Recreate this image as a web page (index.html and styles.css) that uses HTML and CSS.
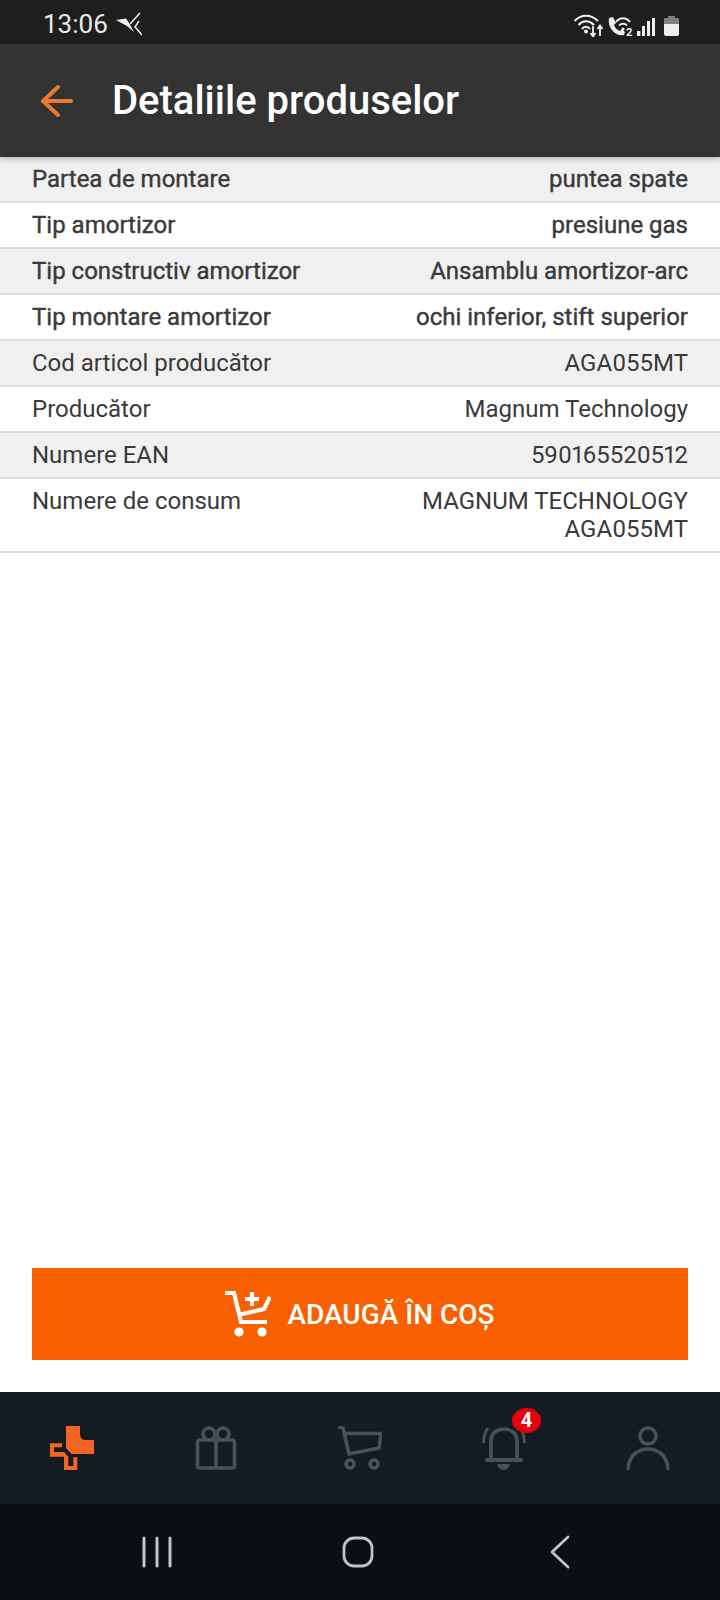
FILE: index.html
```html
<!DOCTYPE html>
<html lang="ro">
<head>
  <meta charset="UTF-8">
  <meta name="viewport" content="width=device-width, initial-scale=1.0">
  <title>Detaliile produselor</title>
  <link rel="stylesheet" href="styles.css">
</head>
<body>
  <div class="statusBar">
    <div class="statusLeft">
      <span class="time">13:06</span>
      <svg class="birdIcon" width="26" height="24" viewBox="0 0 26 24" fill="none" stroke="#eee" stroke-width="1.5">
        <path d="M0 8 L10 6.5 L13 11 L18 20 L11 14 Z" fill="#eee" stroke="none"/>
        <path d="M24 1 L14 12"/>
        <path d="M23 9 L19 15 L26 23"/>
      </svg>
    </div>
    <div class="statusRight">
      <svg width="30" height="26" viewBox="0 0 30 26" fill="none" stroke="#eee" stroke-width="2.2">
        <path d="M1.5 10 C8 3 18 3 25 10"/>
        <path d="M5.5 14 C10 9 16 9 21 14"/>
        <path d="M9 18 C11 15 15 15 17 18"/>
        <circle cx="13" cy="20.5" r="2" fill="#eee" stroke="none"/>
        <path d="M20 15 V25 M17.5 22 L20 25.5 L22.5 22" stroke-width="1.8"/>
        <path d="M27 25 V15 M24.5 18 L27 14.5 L29.5 18" stroke-width="1.8"/>
      </svg>
      <svg width="28" height="34" viewBox="0 -4 28 34" fill="none" stroke="#eee" stroke-width="2">
        <path d="M3 7 L7 6 L10 12 L8 14 C9 17 11 19 14 20 L16 18 L19 21 L18 24 C10 26 1 17 3 7 Z" fill="#eee" stroke="none"/>
        <path d="M10 11 C14 6 20 6 24 11"/>
        <path d="M13 14.5 C15 12 19 12 21 14.5"/>
        <circle cx="17" cy="18" r="1.6" fill="#eee" stroke="none"/>
        <text x="20" y="25" class="simNum">2</text>
      </svg>
      <svg width="19" height="24" viewBox="0 0 19 24" fill="#eee">
        <rect x="0" y="19" width="3.4" height="5"/>
        <rect x="5" y="14" width="3" height="10"/>
        <rect x="10" y="9" width="3" height="15"/>
        <rect x="15" y="6" width="3" height="18"/>
      </svg>
      <svg class="batteryIcon" width="15" height="21" viewBox="0 0 15 21">
        <path d="M0 4 Q0 3 1 3 H4 V1 H11 V3 H14 Q15 3 15 4 V9 H0 Z" fill="#808080"/>
        <path d="M0 9 H15 V19 Q15 21 13 21 H2 Q0 21 0 19 Z" fill="#eee"/>
      </svg>
    </div>
  </div>

  <header class="appBar">
    <svg class="backArrow" width="34" height="34" viewBox="0 0 34 34" fill="none" stroke="#e77b31" stroke-width="4" stroke-linecap="round" stroke-linejoin="round">
      <path d="M31 17 H3"/>
      <path d="M18 3 L3 17 L18 31"/>
    </svg>
    <h1 class="pageTitle">Detaliile produselor</h1>
  </header>

  <main class="content">
    <div class="specList">
      <div class="specRow strong"><span>Partea de montare</span><span class="specValue">puntea spate</span></div>
      <div class="specRow strong"><span>Tip amortizor</span><span class="specValue">presiune gas</span></div>
      <div class="specRow strong"><span>Tip constructiv amortizor</span><span class="specValue">Ansamblu amortizor-arc</span></div>
      <div class="specRow strong"><span>Tip montare amortizor</span><span class="specValue">ochi inferior, stift superior</span></div>
      <div class="specRow"><span>Cod articol producător</span><span class="specValue">AGA055MT</span></div>
      <div class="specRow"><span>Producător</span><span class="specValue">Magnum Technology</span></div>
      <div class="specRow"><span>Numere EAN</span><span class="specValue">590165520512</span></div>
      <div class="specRow"><span>Numere de consum</span><span class="specValue">MAGNUM TECHNOLOGY<br>AGA055MT</span></div>
    </div>

    <button class="addButton">
      <svg width="46" height="46" viewBox="0 0 46 46" fill="none" stroke="#fff" stroke-width="4.2">
        <path d="M0 2 H9 L16 31 H42"/>
        <path d="M13 24 L39 18 L45 6"/>
        <path d="M27 1 V15 M20 8 H34"/>
        <circle cx="14" cy="41" r="4.6" fill="#fff" stroke="none"/>
        <circle cx="37" cy="41" r="4.6" fill="#fff" stroke="none"/>
      </svg>
      <span>ADAUGĂ ÎN COȘ</span>
    </button>
  </main>

  <nav class="tabBar">
    <div class="tabItem">
      <svg width="44" height="44" viewBox="0 0 44 44" fill="#f26522">
        <path d="M16 0 H30 V8 Q30 14 36 14 H44 V28 H21.7 L16 22.3 Z"/>
        <path d="M0 17.3 H12 V21.3 H4 V26 H14 L18.3 30.7 V40 H23.3 V31.3 H27.3 V44 H14 V30.7 H0 Z"/>
      </svg>
    </div>
    <div class="tabItem">
      <svg width="42" height="44" viewBox="0 0 42 44" fill="none" stroke="#4a5058" stroke-width="3.6" stroke-linejoin="round">
        <rect x="2.5" y="14" width="37" height="28" rx="2"/>
        <path d="M21 14 V42"/>
        <circle cx="14" cy="8" r="6"/>
        <circle cx="28" cy="8" r="6"/>
      </svg>
    </div>
    <div class="tabItem">
      <svg width="44" height="44" viewBox="0 0 44 44" fill="none" stroke="#4a5058" stroke-width="3.6">
        <path d="M0.5 1 L5 2 L11 28 L41 22 L43 7.5 H7"/>
        <circle cx="12" cy="38" r="4"/>
        <circle cx="36" cy="38" r="4"/>
      </svg>
    </div>
    <div class="tabItem">
      <div class="bellWrap">
        <svg width="44" height="44" viewBox="0 0 44 44" fill="none" stroke="#4a5058" stroke-width="3.6">
          <path d="M9 33 V15 C9 -1 35 -1 35 15 V33"/>
          <path d="M5 34 H39" stroke-width="4" stroke-linecap="round"/>
          <path d="M15 38 H28 Q26 44 21.5 44 Q17 44 15 38 Z" fill="#4a5058" stroke="none"/>
          <path d="M1.5 17 C1.5 11 3 6 6 2" stroke-width="3"/>
          <path d="M42.5 17 C42.5 11 41 6 38 2" stroke-width="3"/>
        </svg>
        <span class="badge">4</span>
      </div>
    </div>
    <div class="tabItem">
      <svg width="44" height="44" viewBox="0 0 44 44" fill="none" stroke="#4a5058" stroke-width="3.6">
        <circle cx="22" cy="10" r="8"/>
        <path d="M2 44 C2 16 42 16 42 44"/>
      </svg>
    </div>
  </nav>

  <div class="systemNav">
    <svg width="30" height="32" viewBox="0 0 30 32" fill="none" stroke="#c2c4c6" stroke-width="3" stroke-linecap="round">
      <path d="M2 2 V30 M15 2 V30 M28 2 V30"/>
    </svg>
    <svg class="homeIcon" width="32" height="32" viewBox="0 0 32 32" fill="none" stroke="#c2c4c6" stroke-width="2.8">
      <rect x="2" y="2" width="28" height="28" rx="10"/>
    </svg>
    <svg width="20" height="34" viewBox="0 0 20 34" fill="none" stroke="#c2c4c6" stroke-width="2.8" stroke-linecap="round" stroke-linejoin="round">
      <path d="M18 2 L2 17 L18 32"/>
    </svg>
  </div>
</body>
</html>
```

FILE: styles.css
```css
* {
  margin: 0;
  padding: 0;
  box-sizing: border-box;
  font-family: Roboto, "Liberation Sans", sans-serif;
}

html, body {
  width: 100%;
  height: 100%;
  background: #fff;
  overflow: hidden;
}

body {
  display: flex;
  flex-direction: column;
}

.statusBar {
  height: 44px;
  flex: none;
  background: #1e1e1e;
  display: flex;
  align-items: center;
  justify-content: space-between;
  padding: 4px 41px 0 43px;
}

.statusLeft, .statusRight {
  display: flex;
  align-items: center;
}

.statusRight {
  gap: 3px;
}

.time {
  color: #e8e8e8;
  font-size: 26px;
  margin-right: 8px;
}

.simNum {
  font-size: 11px;
  font-weight: 700;
  fill: #eee;
  stroke: none;
}

.batteryIcon {
  margin: 3px 0 0 5px;
}

.appBar {
  height: 113px;
  flex: none;
  background: #333;
  display: flex;
  align-items: center;
  padding-left: 40px;
  box-shadow: 0 2px 6px rgba(0, 0, 0, 0.25);
  position: relative;
  z-index: 2;
}

.pageTitle {
  color: #fff;
  font-size: 40px;
  font-weight: 500;
  margin-left: 38px;
}

.content {
  flex: 1;
  display: flex;
  flex-direction: column;
  justify-content: space-between;
  padding-bottom: 32px;
}

.specRow {
  display: flex;
  justify-content: space-between;
  padding: 8px 32px;
  font-size: 24px;
  line-height: 28px;
  color: #3a3a3a;
  border-bottom: 2px solid #dcdcdc;
}

.specRow:nth-child(odd) {
  background: #f0f0f0;
}

/* static Roboto has no weight between 400 and 500 */
.specRow.strong {
  -webkit-text-stroke: 0.4px #3a3a3a;
}

.specValue {
  text-align: right;
  font-variant-numeric: proportional-nums;
}

.addButton {
  height: 92px;
  margin: 0 32px;
  background: #fa5f00;
  border: none;
  color: #fff;
  font-size: 28px;
  font-weight: 500;
  display: flex;
  align-items: center;
  justify-content: center;
  gap: 16px;
}

.tabBar {
  height: 112px;
  flex: none;
  background: #141b21;
  display: grid;
  grid-template-columns: repeat(5, 1fr);
}

.tabItem {
  display: flex;
  justify-content: center;
  padding-top: 34px;
}

.bellWrap {
  position: relative;
  height: 44px;
}

.badge {
  position: absolute;
  top: -18px;
  right: -15px;
  width: 29px;
  height: 25px;
  border-radius: 50%;
  background: #e8000f;
  color: #fff;
  font-size: 20px;
  font-weight: 700;
  line-height: 25px;
  text-align: center;
}

.systemNav {
  height: 96px;
  flex: none;
  background: #0b0f12;
  display: flex;
  align-items: center;
  justify-content: space-between;
  padding: 0 150px 0 142px;
}

.homeIcon {
  margin-right: 6px;
}
```
